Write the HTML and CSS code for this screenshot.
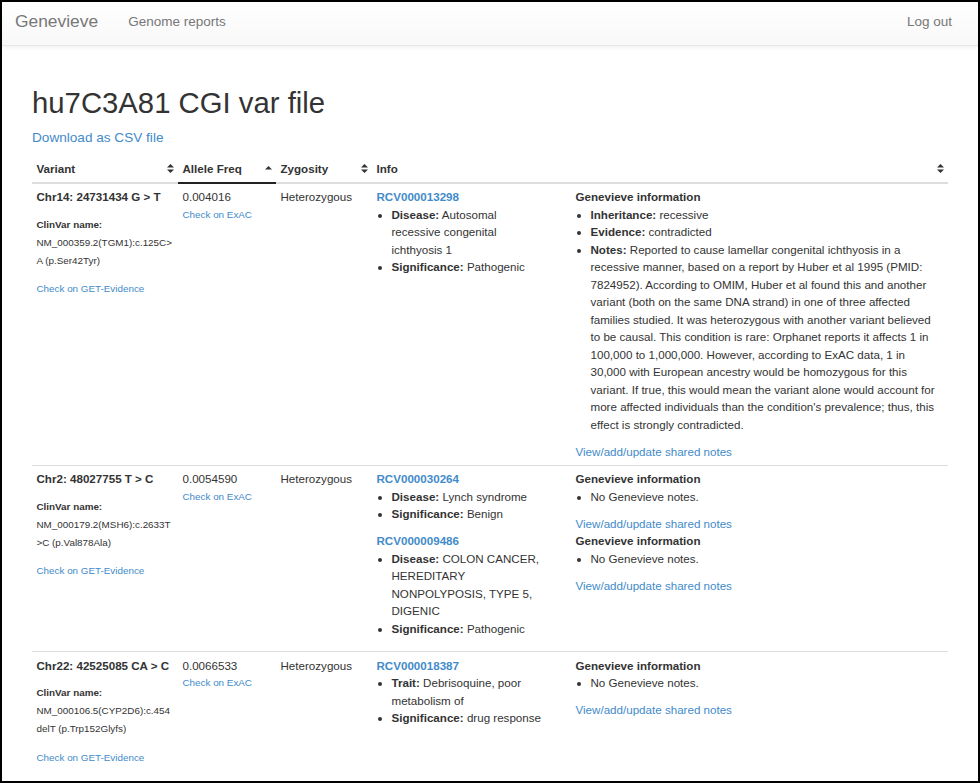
FILE: index.html
```html
<!DOCTYPE html>
<html lang="en">
<head>
<meta charset="utf-8">
<title>hu7C3A81 CGI var file</title>
<link rel="stylesheet" href="styles.css">
</head>
<body>
<div class="frame">
  <nav class="navbar">
    <a class="brand" href="#">Genevieve</a>
    <a class="nav-link" href="#">Genome reports</a>
    <a class="nav-link logout" href="#">Log out</a>
  </nav>
  <main class="container">
    <h1 class="title">hu7C3A81 CGI var file</h1>
    <p class="download"><a href="#">Download as CSV file</a></p>
    <table class="variants">
      <colgroup>
        <col class="c-variant">
        <col class="c-freq">
        <col class="c-zyg">
        <col class="c-info">
      </colgroup>
      <thead>
        <tr>
          <th><div class="th-inner"><span>Variant</span><svg class="sort" width="7" height="9" viewBox="0 0 7 9"><polygon points="0,3.6 3.5,0 7,3.6"/><polygon points="0,5.4 3.5,9 7,5.4"/></svg></div></th>
          <th class="active"><div class="th-inner"><span>Allele Freq</span><svg class="sort" width="7" height="9" viewBox="0 0 7 9"><polygon points="0,5.6 3.5,2 7,5.6"/></svg></div></th>
          <th><div class="th-inner"><span>Zygosity</span><svg class="sort" width="7" height="9" viewBox="0 0 7 9"><polygon points="0,3.6 3.5,0 7,3.6"/><polygon points="0,5.4 3.5,9 7,5.4"/></svg></div></th>
          <th><div class="th-inner"><span>Info</span><svg class="sort" width="7" height="9" viewBox="0 0 7 9"><polygon points="0,3.6 3.5,0 7,3.6"/><polygon points="0,5.4 3.5,9 7,5.4"/></svg></div></th>
        </tr>
      </thead>
      <tbody>
        <tr>
          <td>
            <p class="chr">Chr14: 24731434 G &gt; T</p>
            <p class="clinvar"><strong>ClinVar name:</strong><br>NM_000359.2(TGM1):c.125C&gt;A (p.Ser42Tyr)</p>
            <p class="get"><a href="#">Check on GET-Evidence</a></p>
          </td>
          <td>
            <div>0.004016</div>
            <a class="exac" href="#">Check on ExAC</a>
          </td>
          <td>Heterozygous</td>
          <td>
            <div class="pair">
              <div class="clinvar-block">
                <a class="rcv" href="#">RCV000013298</a>
                <ul>
                  <li><strong>Disease:</strong> Autosomal recessive congenital ichthyosis 1</li>
                  <li><strong>Significance:</strong> Pathogenic</li>
                </ul>
              </div>
              <div class="gv-block">
                <div class="gv-title">Genevieve information</div>
                <ul>
                  <li><strong>Inheritance:</strong> recessive</li>
                  <li><strong>Evidence:</strong> contradicted</li>
                  <li><strong>Notes:</strong> Reported to cause lamellar congenital ichthyosis in a recessive manner, based on a report by Huber et al 1995 (PMID: 7824952). According to OMIM, Huber et al found this and another variant (both on the same DNA strand) in one of three affected families studied. It was heterozygous with another variant believed to be causal. This condition is rare: Orphanet reports it affects 1 in 100,000 to 1,000,000. However, according to ExAC data, 1 in 30,000 with European ancestry would be homozygous for this variant. If true, this would mean the variant alone would account for more affected individuals than the condition's prevalence; thus, this effect is strongly contradicted.</li>
                </ul>
                <a class="notes-link" href="#">View/add/update shared notes</a>
              </div>
            </div>
          </td>
        </tr>
        <tr>
          <td>
            <p class="chr">Chr2: 48027755 T &gt; C</p>
            <p class="clinvar"><strong>ClinVar name:</strong><br>NM_000179.2(MSH6):c.2633T&gt;C (p.Val878Ala)</p>
            <p class="get"><a href="#">Check on GET-Evidence</a></p>
          </td>
          <td>
            <div>0.0054590</div>
            <a class="exac" href="#">Check on ExAC</a>
          </td>
          <td>Heterozygous</td>
          <td>
            <div class="pair">
              <div class="clinvar-block">
                <a class="rcv" href="#">RCV000030264</a>
                <ul>
                  <li><strong>Disease:</strong> Lynch syndrome</li>
                  <li><strong>Significance:</strong> Benign</li>
                </ul>
              </div>
              <div class="gv-block">
                <div class="gv-title">Genevieve information</div>
                <ul>
                  <li>No Genevieve notes.</li>
                </ul>
                <a class="notes-link" href="#">View/add/update shared notes</a>
              </div>
            </div>
            <div class="pair">
              <div class="clinvar-block">
                <a class="rcv" href="#">RCV000009486</a>
                <ul>
                  <li><strong>Disease:</strong> COLON CANCER, HEREDITARY NONPOLYPOSIS, TYPE 5, DIGENIC</li>
                  <li><strong>Significance:</strong> Pathogenic</li>
                </ul>
              </div>
              <div class="gv-block">
                <div class="gv-title">Genevieve information</div>
                <ul>
                  <li>No Genevieve notes.</li>
                </ul>
                <a class="notes-link" href="#">View/add/update shared notes</a>
              </div>
            </div>
          </td>
        </tr>
        <tr>
          <td>
            <p class="chr">Chr22: 42525085 CA &gt; C</p>
            <p class="clinvar"><strong>ClinVar name:</strong><br>NM_000106.5(CYP2D6):c.454delT (p.Trp152Glyfs)</p>
            <p class="get"><a href="#">Check on GET-Evidence</a></p>
          </td>
          <td>
            <div>0.0066533</div>
            <a class="exac" href="#">Check on ExAC</a>
          </td>
          <td>Heterozygous</td>
          <td>
            <div class="pair">
              <div class="clinvar-block">
                <a class="rcv" href="#">RCV000018387</a>
                <ul>
                  <li><strong>Trait:</strong> Debrisoquine, poor metabolism of</li>
                  <li><strong>Significance:</strong> drug response</li>
                </ul>
              </div>
              <div class="gv-block">
                <div class="gv-title">Genevieve information</div>
                <ul>
                  <li>No Genevieve notes.</li>
                </ul>
                <a class="notes-link" href="#">View/add/update shared notes</a>
              </div>
            </div>
          </td>
        </tr>
      </tbody>
    </table>
  </main>
</div>
</body>
</html>
```

FILE: styles.css
```css
* { box-sizing: border-box; }

html, body {
  margin: 0;
  padding: 0;
  background: #fff;
}

body {
  font-family: "Liberation Sans", Arial, Helvetica, sans-serif;
  color: #333;
}

a { color: #428bca; text-decoration: none; }

.frame {
  width: 980px;
  height: 783px;
  border: 2px solid #000;
  overflow: hidden;
  background: #fff;
}

/* Navbar */
.navbar {
  display: flex;
  align-items: center;
  height: 44px;
  padding: 0 26px 5px 13px;
  background: linear-gradient(to bottom, #ffffff 0%, #f8f8f8 100%);
  border-bottom: 1px solid #e7e7e7;
  box-shadow: 0 1px 5px rgba(0, 0, 0, 0.075);
  position: relative;
}

.brand {
  font-size: 17.4px;
  color: #777;
  margin-right: 30px;
}

.nav-link {
  font-size: 13.5px;
  color: #777;
}

.logout { margin-left: auto; }

/* Content */
.container {
  padding: 0 30px;
}

.title {
  margin: 40px 0 8.6px;
  font-size: 29.3px;
  line-height: 33px;
  font-weight: normal;
  color: #333;
}

.download {
  margin: 0 0 8px;
  font-size: 13.6px;
  line-height: 19.4px;
}

/* Table */
.variants {
  width: 916px;
  table-layout: fixed;
  border-collapse: collapse;
  font-size: 11.6px;
  line-height: 17.5px;
}

.c-variant { width: 146px; }
.c-freq { width: 98px; }
.c-zyg { width: 96px; }
.c-info { width: 576px; }

.variants th,
.variants td {
  padding: 4.5px;
  text-align: left;
  vertical-align: top;
}

.variants th {
  font-weight: bold;
  vertical-align: bottom;
  border-bottom: 2px solid #ddd;
}

.variants th.active { border-bottom-color: #222; }

.variants td { border-top: 1px solid #ddd; }

.th-inner {
  display: flex;
  justify-content: space-between;
  align-items: center;
}

.sort { fill: #333; flex: none; }

.chr {
  margin: 0 0 10px;
  font-weight: bold;
}

.clinvar {
  margin: 0 0 10px;
  font-size: 9.85px;
  line-height: 18.2px;
  overflow-wrap: break-word;
}

.get {
  margin: 0 0 8px;
  font-size: 9.85px;
  line-height: 18px;
}

.exac {
  display: block;
  font-size: 9.85px;
}

.pair {
  display: grid;
  grid-template-columns: 169px 1fr;
  column-gap: 30px;
}

.rcv {
  display: block;
  font-weight: bold;
}

.pair ul {
  margin: 0 0 9.5px;
  padding-left: 15px;
}

.gv-title { font-weight: bold; }

.notes-link { display: block; }
```
